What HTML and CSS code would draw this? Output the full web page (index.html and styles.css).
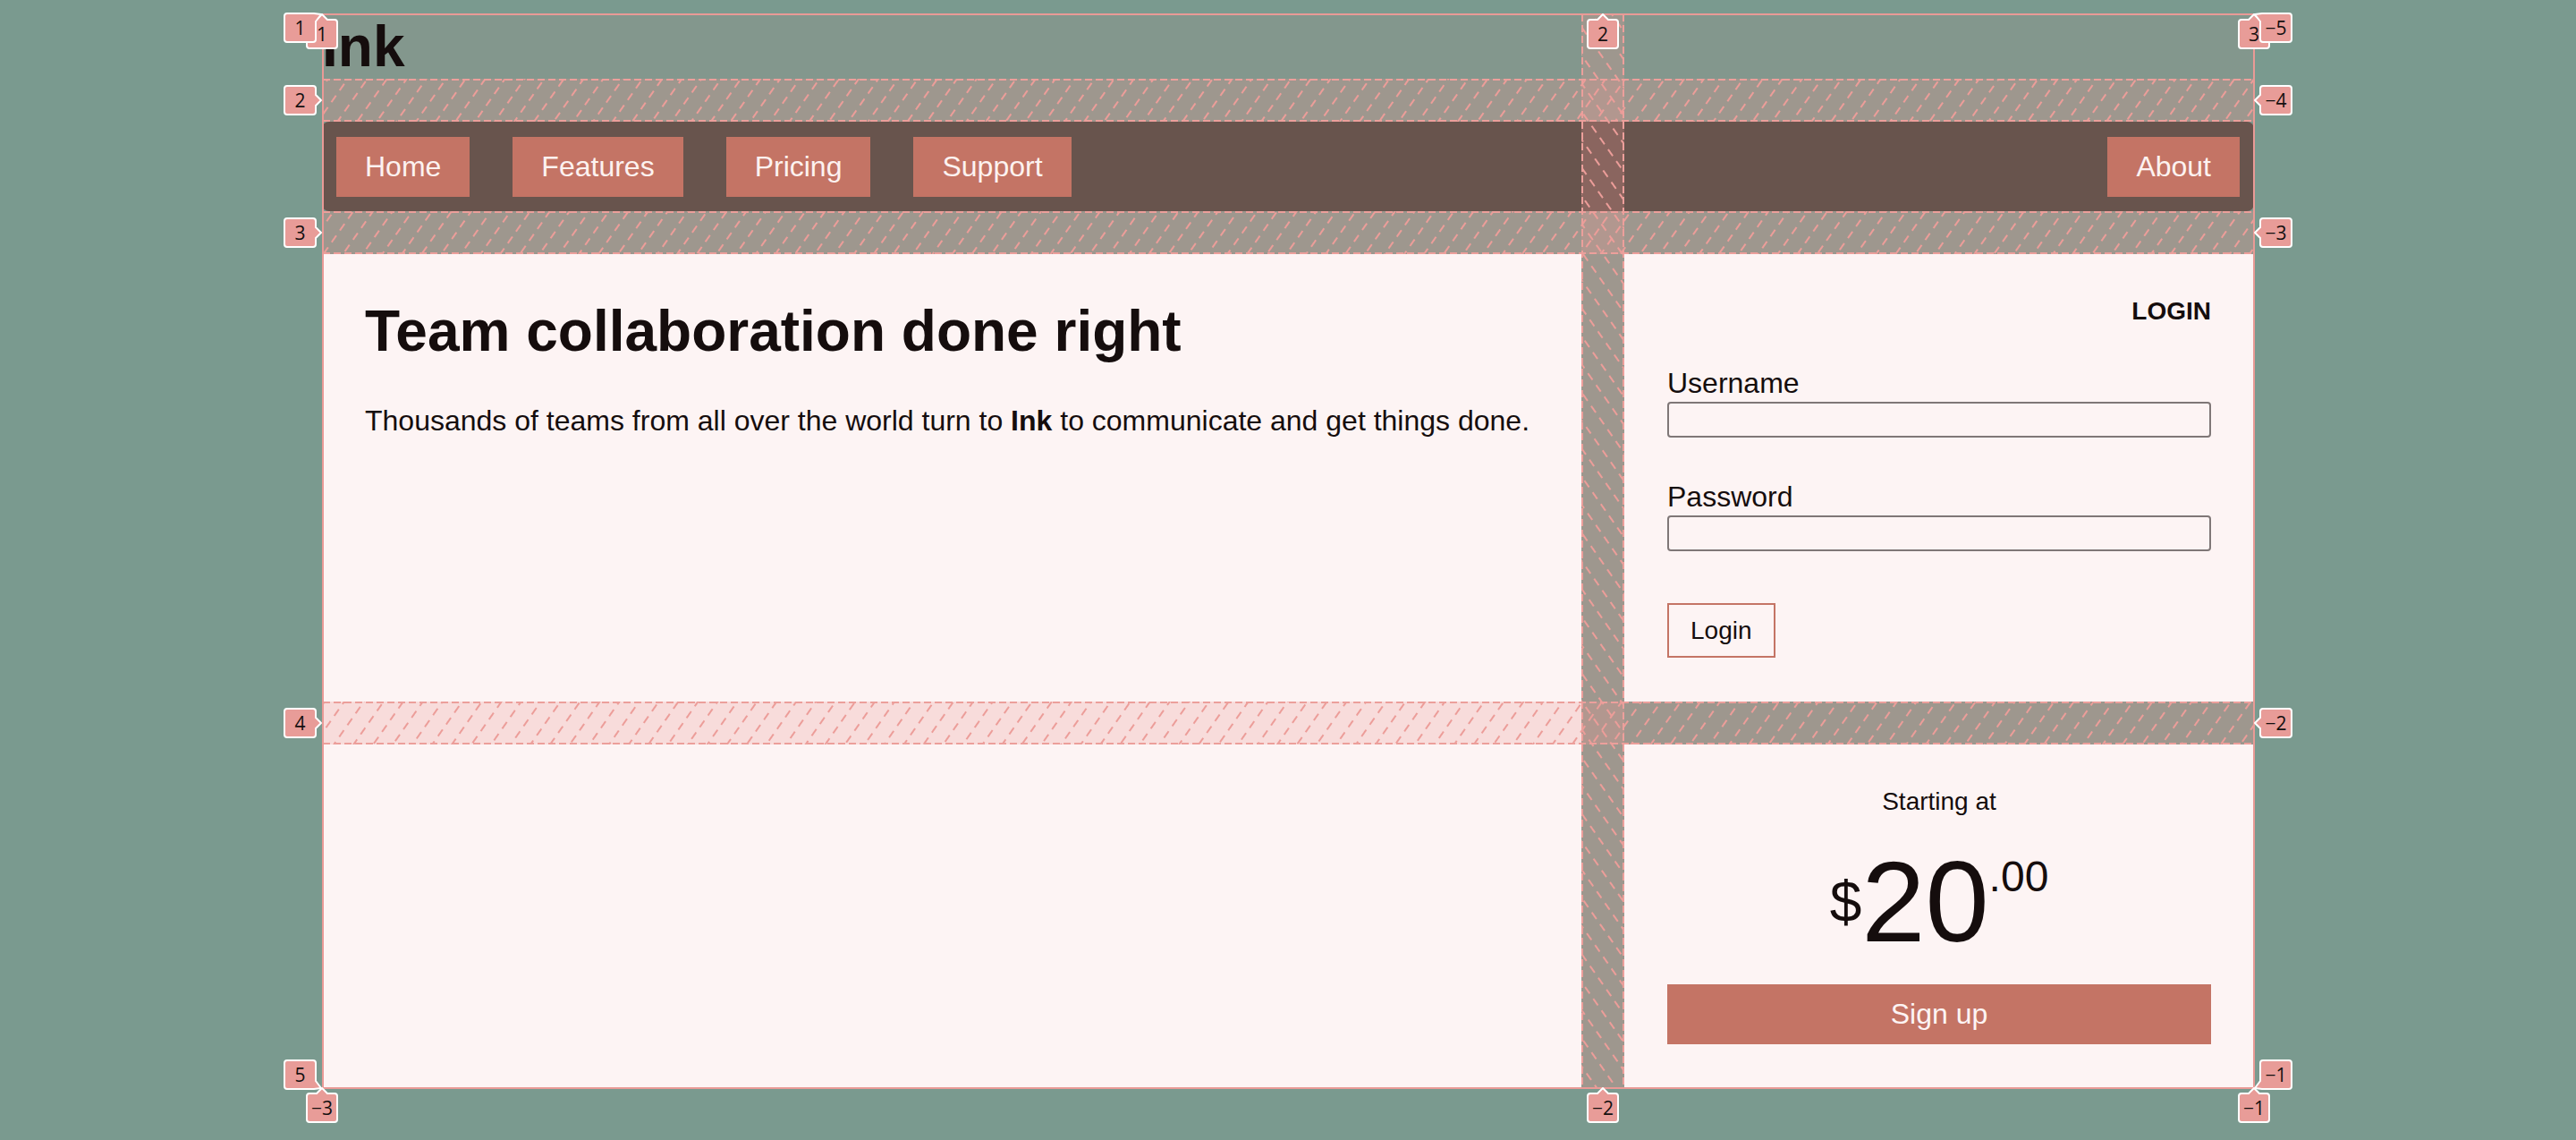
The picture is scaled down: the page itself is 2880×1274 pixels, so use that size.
FILE: index.html
```html
<!DOCTYPE html>
<html lang="en">
<head>
<meta charset="utf-8">
<title>Ink</title>
<link rel="stylesheet" href="styles.css">
</head>
<body>
<div class="page">
  <header class="site-header">
    <h1 class="logo">Ink</h1>
  </header>
  <nav class="site-nav">
    <a class="nav-link" href="#">Home</a>
    <a class="nav-link" href="#">Features</a>
    <a class="nav-link" href="#">Pricing</a>
    <a class="nav-link" href="#">Support</a>
    <a class="nav-link nav-link--end" href="#">About</a>
  </nav>
  <main class="hero">
    <h2 class="hero-title">Team collaboration done right</h2>
    <p class="hero-text">Thousands of teams from all over the world turn to <strong>Ink</strong> to communicate and get things done.</p>
  </main>
  <section class="login">
    <h3 class="login-title">LOGIN</h3>
    <form class="login-form">
      <label class="field">
        <span class="field-label">Username</span>
        <input class="field-input" type="text">
      </label>
      <label class="field">
        <span class="field-label">Password</span>
        <input class="field-input" type="password">
      </label>
      <button class="login-button" type="button">Login</button>
    </form>
  </section>
  <section class="pricing">
    <p class="pricing-label">Starting at</p>
    <div class="price"><span class="price-currency">$</span><span class="price-amount">20</span><span class="price-cents">.00</span></div>
    <button class="signup" type="button">Sign up</button>
  </section>
</div>

<svg class="grid-overlay" xmlns="http://www.w3.org/2000/svg" width="2880" height="1274" viewBox="0 0 2880 1274">
  <defs>
    <pattern id="hatch-row" width="18" height="16" patternUnits="userSpaceOnUse" patternTransform="rotate(35)">
      <line x1="9" y1="0" x2="9" y2="16" stroke="#ec9d99" stroke-width="2" stroke-dasharray="9 7"/>
    </pattern>
    <pattern id="hatch-col" width="18" height="16" patternUnits="userSpaceOnUse" patternTransform="rotate(-35)">
      <line x1="9" y1="0" x2="9" y2="16" stroke="#ec9d99" stroke-width="2" stroke-dasharray="9 7"/>
    </pattern>
    <path id="tag-up" d="M0,0 L6,6 H14 Q17,6 17,9 V35 Q17,38 14,38 H-14 Q-17,38 -17,35 V9 Q-17,6 -14,6 H-6 Z"/>
    <path id="tag-right" d="M0,0 L-6,-6 V-13 Q-6,-16 -9,-16 H-38 Q-41,-16 -41,-13 V13 Q-41,16 -38,16 H-9 Q-6,16 -6,13 V6 Z"/>
    <path id="tag-left" d="M0,0 L6,-6 V-13 Q6,-16 9,-16 H38 Q41,-16 41,-13 V13 Q41,16 38,16 H9 Q6,16 6,13 V6 Z"/>
    <path id="tag-tl" d="M0,0 L-6,8 V28 Q-6,31 -9,31 H-38 Q-41,31 -41,28 V2 Q-41,-1 -38,-1 H-8 Z"/>
    <path id="tag-tr" d="M0,0 L6,8 V28 Q6,31 9,31 H38 Q41,31 41,28 V2 Q41,-1 38,-1 H8 Z"/>
    <path id="tag-bl" d="M0,0 L-6,-8 V-28 Q-6,-31 -9,-31 H-38 Q-41,-31 -41,-28 V-2 Q-41,1 -38,1 H-8 Z"/>
    <path id="tag-br" d="M0,0 L6,-8 V-28 Q6,-31 9,-31 H38 Q41,-31 41,-28 V-2 Q41,1 38,1 H8 Z"/>
  </defs>

  <g class="gap-fill">
    <rect x="361" y="88" width="2159" height="48"/>
    <rect x="361" y="236" width="2159" height="48"/>
    <rect x="361" y="784" width="2159" height="48"/>
    <rect x="1768" y="16" width="48" height="1200"/>
  </g>
  <g>
    <rect x="361" y="88" width="2159" height="48" fill="url(#hatch-row)"/>
    <rect x="361" y="236" width="2159" height="48" fill="url(#hatch-row)"/>
    <rect x="361" y="784" width="2159" height="48" fill="url(#hatch-row)"/>
    <rect x="1768" y="16" width="48" height="1200" fill="url(#hatch-col)"/>
  </g>
  <g class="gap-edge">
    <line x1="361" y1="89" x2="2520" y2="89"/>
    <line x1="361" y1="135" x2="2520" y2="135"/>
    <line x1="361" y1="237" x2="2520" y2="237"/>
    <line x1="361" y1="283" x2="2520" y2="283"/>
    <line x1="361" y1="785" x2="2520" y2="785"/>
    <line x1="361" y1="831" x2="2520" y2="831"/>
    <line x1="1769" y1="16" x2="1769" y2="1216"/>
    <line x1="1815" y1="16" x2="1815" y2="1216"/>
  </g>
  <rect class="grid-outline" x="361" y="16" width="2159" height="1200"/>

  <g class="tag">
    <use href="#tag-up" x="360" y="16"/>
    <use href="#tag-up" x="1792" y="16"/>
    <use href="#tag-up" x="2520" y="16"/>
    <use href="#tag-up" x="360" y="1216"/>
    <use href="#tag-up" x="1792" y="1216"/>
    <use href="#tag-up" x="2520" y="1216"/>
  </g>
  <g class="tag-text">
    <text x="360" y="38">1</text>
    <text x="1792" y="38">2</text>
    <text x="2520" y="38">3</text>
    <text x="360" y="1238">−3</text>
    <text x="1792" y="1238">−2</text>
    <text x="2520" y="1238">−1</text>
  </g>

  <g class="tag">
    <use href="#tag-tl" x="359" y="16"/>
    <use href="#tag-right" x="359" y="112"/>
    <use href="#tag-right" x="359" y="260"/>
    <use href="#tag-right" x="359" y="808"/>
    <use href="#tag-bl" x="359" y="1216"/>
    <use href="#tag-tr" x="2521" y="16"/>
    <use href="#tag-left" x="2521" y="112"/>
    <use href="#tag-left" x="2521" y="260"/>
    <use href="#tag-left" x="2521" y="808"/>
    <use href="#tag-br" x="2521" y="1216"/>
  </g>
  <g class="tag-text">
    <text x="335.5" y="31">1</text>
    <text x="335.5" y="112">2</text>
    <text x="335.5" y="260">3</text>
    <text x="335.5" y="808">4</text>
    <text x="335.5" y="1201">5</text>
    <text x="2544.5" y="31">−5</text>
    <text x="2544.5" y="112">−4</text>
    <text x="2544.5" y="260">−3</text>
    <text x="2544.5" y="808">−2</text>
    <text x="2544.5" y="1201">−1</text>
  </g>
</svg>
</body>
</html>
```

FILE: styles.css
```css
html {
  background: #7a9a8f;
}

body {
  margin: 0;
  padding: 16px 0 0;
  overflow: hidden;
  font-family: "Liberation Sans", Arial, Helvetica, sans-serif;
  color: #150d0d;
}

.page {
  width: 2160px;
  margin: 0 auto;
  display: grid;
  grid-template-columns: 2fr 1fr;
  grid-template-rows: 72px 100px 500px 384px;
  gap: 48px;
  background: #83978d;
}

.site-header {
  grid-column: 1 / -1;
}

.logo {
  margin: 0;
  font-size: 64px;
  line-height: 72px;
  font-weight: 700;
}

.site-nav {
  grid-column: 1 / -1;
  display: flex;
  align-items: center;
  gap: 48px;
  padding: 16px;
  background: #68544d;
  border-radius: 8px;
}

.nav-link {
  display: block;
  padding: 15px 32px;
  font-size: 32px;
  line-height: 37px;
  color: #fdf2f0;
  background: #c47465;
  text-decoration: none;
}

.nav-link--end {
  margin-left: auto;
}

.hero {
  grid-column: 1;
  grid-row: 3 / 5;
  background: #fdf4f4;
  padding: 48px;
}

.hero-title {
  margin: 0 0 44px;
  font-size: 64px;
  line-height: 76px;
  font-weight: 700;
}

.hero-text {
  margin: 0;
  font-size: 32px;
  line-height: 37px;
}

.login {
  grid-column: 2;
  grid-row: 3;
  background: #fdf4f4;
  padding: 48px;
}

.login-title {
  margin: 0;
  font-size: 28px;
  line-height: 32px;
  font-weight: 700;
  text-align: right;
}

.login-form {
  margin: 0;
}

.field {
  display: block;
  margin-top: 45px;
}

.field + .field {
  margin-top: 47px;
}

.field-label {
  display: block;
  font-size: 32px;
  line-height: 38px;
}

.field-input {
  display: block;
  box-sizing: border-box;
  width: 100%;
  height: 40px;
  margin: 2px 0 0;
  padding: 0 8px;
  border: 2px solid #7f7777;
  border-radius: 4px;
  background: #fdf4f4;
  font: inherit;
  font-size: 28px;
}

.login-button {
  display: block;
  margin-top: 58px;
  padding: 12px 24px;
  font-family: inherit;
  font-size: 28px;
  line-height: 33px;
  color: #150d0d;
  background: transparent;
  border: 2px solid #c47465;
  border-radius: 0;
}

.pricing {
  grid-column: 2;
  grid-row: 4;
  background: #fdf4f4;
  padding: 48px;
  text-align: center;
}

.pricing-label {
  margin: 0;
  font-size: 28px;
  line-height: 32px;
}

.price {
  margin-top: 32px;
  height: 128px;
  font-size: 128px;
  line-height: 128px;
  white-space: nowrap;
}

.price-currency {
  font-size: 64px;
  line-height: 64px;
  vertical-align: 22px;
}

.price-cents {
  font-size: 48px;
  line-height: 48px;
  vertical-align: 56px;
}

.signup {
  display: block;
  width: 100%;
  margin-top: 28px;
  padding: 15px;
  font-family: inherit;
  font-size: 32px;
  line-height: 37px;
  color: #fdf4f4;
  background: #c47465;
  border: 0;
  border-radius: 0;
}

/* grid inspector overlay */
.grid-overlay {
  position: absolute;
  top: 0;
  left: 0;
  width: 2880px;
  height: 1274px;
  pointer-events: none;
}

.gap-fill {
  fill: rgb(236, 152, 148);
  fill-opacity: 0.26;
}

.gap-edge {
  stroke: #ec9f9b;
  stroke-width: 2;
  stroke-dasharray: 8 4;
}

.grid-outline {
  fill: none;
  stroke: #e99a96;
  stroke-width: 2;
}

.tag {
  fill: #e89c98;
  stroke: #ffffff;
  stroke-width: 2;
  stroke-linejoin: round;
}

.tag-text {
  font-family: "Open Sans", "DejaVu Sans", sans-serif;
  font-size: 21px;
  fill: #141010;
  text-anchor: middle;
  dominant-baseline: central;
}
```
